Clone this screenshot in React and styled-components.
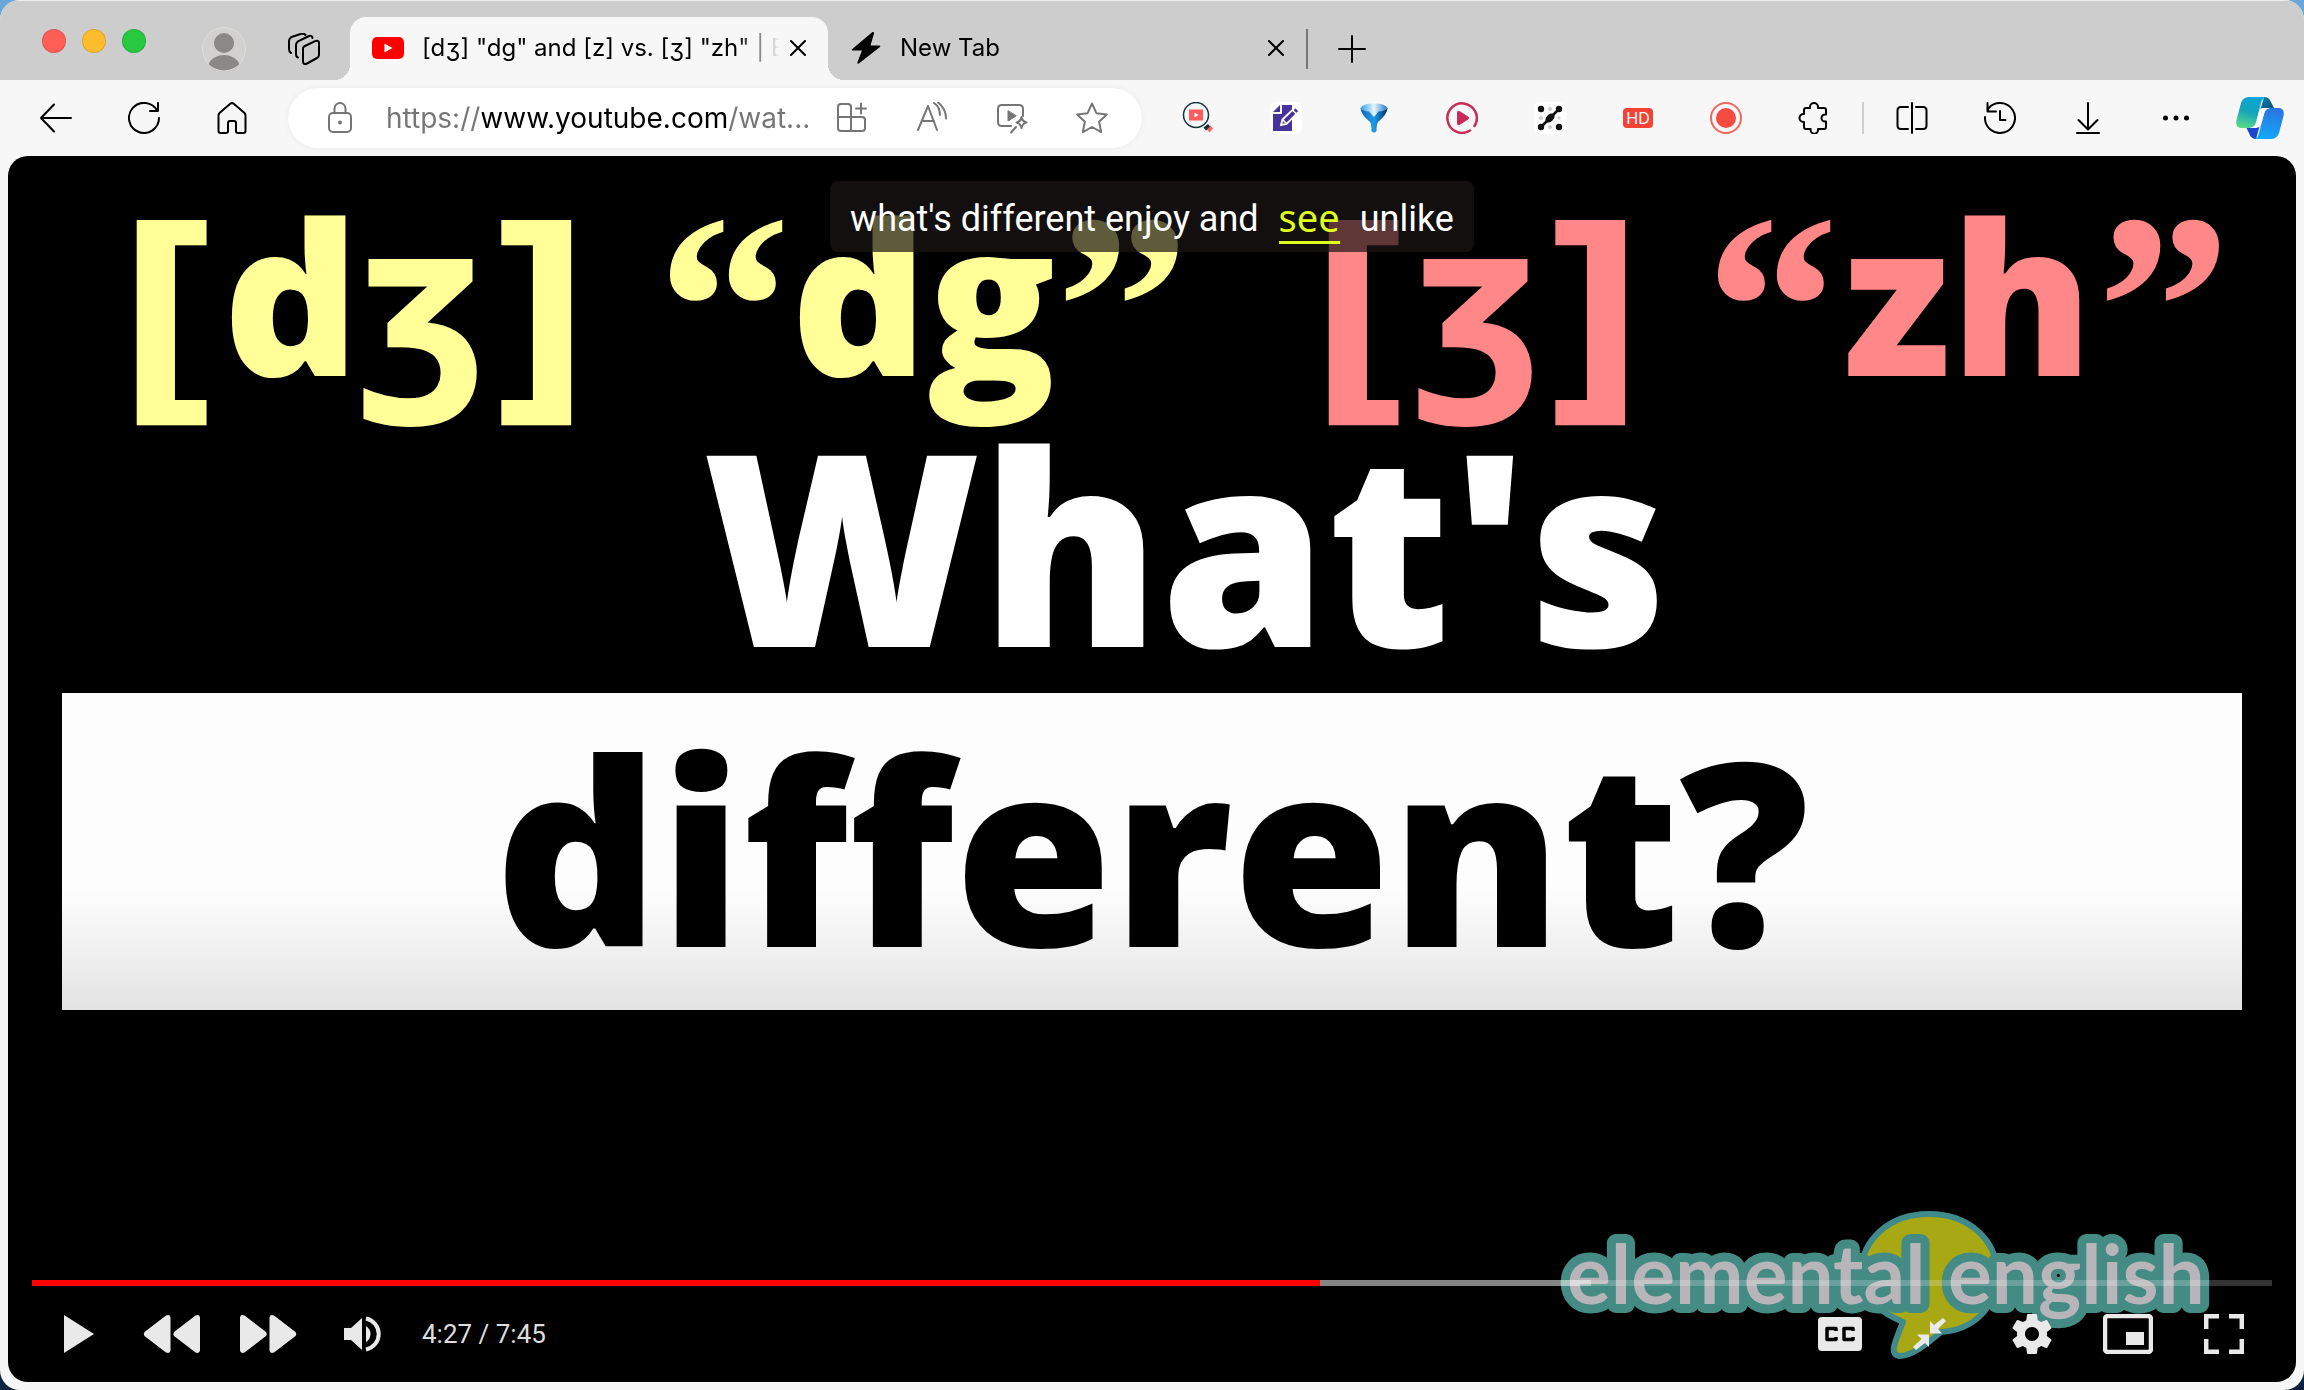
import React from "react";
import styled, { createGlobalStyle } from "styled-components";

const UI = `Inter, "Noto Sans", sans-serif`;
const PLAYER = `Roboto, "Noto Sans", sans-serif`;
const SLIDE = `"Open Sans", "Noto Sans", sans-serif`;

const GlobalStyle = createGlobalStyle`
  * { box-sizing: border-box; }
  body {
    margin: 0;
    background: linear-gradient(#6aa8dc, #0b2340);
    font-family: ${UI};
  }
  button {
    margin: 0;
    padding: 0;
    border: 0;
    background: none;
    color: inherit;
    font: inherit;
    cursor: pointer;
  }
  svg { display: block; flex: none; }
`;

/* ---------- window ---------- */

const Window = styled.div`
  display: flex;
  flex-direction: column;
  min-height: 100vh;
  overflow: hidden;
  border-radius: 20px;
  background: #f7f7f7;
  color: #000;
`;

const TabStrip = styled.header`
  display: flex;
  align-items: stretch;
  height: 80px;
  padding: 16px 0 0 42px;
  background: #cdcdcd;
  border-top: 1px solid #ececec;
`;

const Lights = styled.div`
  display: flex;
  gap: 16px;
  padding-top: 12px;
`;

const Light = styled.button`
  width: 24px;
  height: 24px;
  border-radius: 50%;
  background: ${(p) => p.$color};
  box-shadow: inset 0 0 0 1px rgba(0, 0, 0, 0.12);
`;

const StripTools = styled.div`
  display: flex;
  align-items: center;
  gap: 42px;
  padding: 0 30px 0 56px;
`;

const TabItem = styled.div`
  position: relative;
  display: flex;
  align-items: center;
  width: 478px;
  padding: 0 18px 2px 22px;
  border-radius: 16px 16px 0 0;
  background: ${(p) => (p.$active ? "#f7f7f7" : "transparent")};

  &::before,
  &::after {
    content: ${(p) => (p.$active ? '""' : "none")};
    position: absolute;
    bottom: 0;
    width: 16px;
    height: 16px;
  }
  &::before {
    right: 100%;
    background: radial-gradient(circle at 0 0, transparent 16px, #f7f7f7 16px);
  }
  &::after {
    left: 100%;
    background: radial-gradient(circle at 100% 0, transparent 16px, #f7f7f7 16px);
  }
`;

const TabLabel = styled.button`
  display: flex;
  flex: 1;
  align-items: center;
  gap: 18px;
  min-width: 0;
  height: 100%;
`;

const TabTitle = styled.span`
  flex: 1;
  min-width: 0;
  margin-right: 6px;
  white-space: nowrap;
  text-align: left;
  font-size: 24px;
  line-height: 32px;
  mask-image: linear-gradient(to left, transparent, #000 44px);
`;

const IconButton = styled.button`
  display: grid;
  flex: none;
  place-items: center;
  width: ${(p) => p.$width || 88}px;
  height: ${(p) => p.$height || 48}px;
  color: ${(p) => p.$color || "inherit"};
`;

const Divider = styled.span`
  flex: none;
  width: 2px;
  height: ${(p) => p.$height}px;
  margin: 0 ${(p) => p.$gap || 0}px;
  background: ${(p) => p.$color};
  align-self: center;
`;

/* ---------- toolbar ---------- */

const Toolbar = styled.nav`
  display: flex;
  align-items: center;
  height: 76px;
  padding: 0 4px 0 12px;
`;

const AddressBar = styled.div`
  display: flex;
  flex: 1;
  align-items: center;
  min-width: 0;
  height: 60px;
  margin: 0 12px;
  padding: 0 10px 0 12px;
  border-radius: 30px;
  background: #fff;
  box-shadow: 0 0 6px rgba(0, 0, 0, 0.06);
  color: #757575;
`;

const AddressInput = styled.input`
  flex: 1;
  min-width: 0;
  margin-left: 6px;
  padding: 0;
  border: 0;
  outline: 0;
  font: 28px/40px ${UI};
  color: transparent;
  caret-color: #000;
  background: linear-gradient(90deg, #757575 96px, #000 96px, #000 342px, #757575 342px);
  background-clip: text;
  -webkit-background-clip: text;
`;

const Tools = styled.div`
  display: flex;
  align-items: center;
`;

/* ---------- player ---------- */

const Player = styled.main`
  position: relative;
  display: flex;
  flex: 1;
  flex-direction: column;
  margin: 0 8px 8px;
  overflow: hidden;
  border-radius: 20px;
  background: #000;
`;

const Slide = styled.section`
  flex: 1;
  padding-top: 48px;
  font-family: ${SLIDE};
  font-weight: 800;
`;

const Phonemes = styled.div`
  display: flex;
  justify-content: space-between;
  padding: 0 65px 0 109px;
  white-space: nowrap;
`;

const PhonemePair = styled.div`
  display: flex;
  gap: 66px;
  color: ${(p) => p.$color};
`;

const Phoneme = styled.span`
  display: flex;
  align-items: flex-start;
  justify-content: space-between;
  width: ${(p) => p.$width}px;
  font-size: 212px;
  line-height: 180px;
`;

const Bracket = styled.span`
  font-family: "DejaVu Sans", sans-serif;
  font-size: 230px;
  line-height: 224px;
`;

const Quote = styled.span`
  font-family: "Liberation Serif", serif;
  font-size: 268px;
  line-height: 208px;
`;

const Question = styled.div`
  padding-left: 66px;
  text-align: center;
  font-size: 268px;
  line-height: 232px;
  color: #fff;
`;

const Band = styled.div`
  display: flex;
  align-items: center;
  justify-content: center;
  height: 317px;
  margin: 33px 54px 0;
  padding-bottom: 8px;
  background: linear-gradient(#fdfdfd 62%, #e3e3e3);
  color: #000;
  font-size: 256px;
  line-height: 244px;
`;

const Caption = styled.p`
  position: absolute;
  top: 25px;
  left: 50%;
  display: flex;
  gap: 20px;
  margin: 0;
  padding: 16px 20px 8px;
  transform: translateX(-50%);
  border-radius: 8px;
  background: rgba(26, 22, 20, 0.7);
  color: #fff;
  font: 36px/44px ${PLAYER};
  white-space: nowrap;
`;

const Marked = styled.span`
  height: 47px;
  border-bottom: 3px solid #dfff1c;
  color: #dfff1c;
  font-family: "Noto Sans", sans-serif;
  font-size: 38px;
  line-height: 40px;
`;

const Logo = styled.svg`
  position: absolute;
  right: 76px;
  bottom: 22px;
`;

const Controls = styled.div`
  position: relative;
  color: #e9e9e9;
`;

const Seek = styled.input`
  appearance: none;
  display: block;
  width: calc(100% - 48px);
  height: 6px;
  margin: 0 24px;
  background: linear-gradient(
    90deg,
    #f00 ${(p) => p.$played}%,
    rgba(255, 255, 255, 0.52) ${(p) => p.$played}%,
    rgba(255, 255, 255, 0.52) ${(p) => p.$loaded}%,
    rgba(255, 255, 255, 0.2) ${(p) => p.$loaded}%
  );

  &::-webkit-slider-thumb {
    appearance: none;
    width: 0;
    height: 0;
  }
`;

const ControlRow = styled.div`
  display: flex;
  align-items: center;
  height: 96px;
  padding: 0 24px 0 20px;
`;

const Clock = styled.span`
  flex: 1;
  padding-left: 10px;
  font: 26px/32px ${PLAYER};
  color: #ddd;
`;

/* ---------- icons ---------- */

const Line = ({ w = 32, h = 32, sw = 2, children, ...rest }) => (
  <svg width={w} height={h} viewBox={`0 0 ${w} ${h}`} fill="none" stroke="currentColor"
    strokeWidth={sw} strokeLinecap="round" strokeLinejoin="round" aria-hidden="true" {...rest}>
    {children}
  </svg>
);

const Solid = ({ w = 32, h = 32, children }) => (
  <svg width={w} height={h} viewBox={`0 0 ${w} ${h}`} fill="currentColor" aria-hidden="true">
    {children}
  </svg>
);

const CloseIcon = () => <Line w={16} h={16}><path d="M1 1l14 14M15 1L1 15" /></Line>;

const ProfileIcon = () => (
  <svg width="44" height="44" viewBox="0 0 44 44" aria-hidden="true">
    <clipPath id="avatar"><circle cx="22" cy="22" r="21.5" /></clipPath>
    <circle cx="22" cy="22" r="21.5" fill="#d2d1cf" stroke="#dededc" />
    <g fill="#8a8987" clipPath="url(#avatar)">
      <circle cx="22" cy="16" r="10" />
      <ellipse cx="22" cy="41" rx="16" ry="13" />
    </g>
  </svg>
);

const WorkspacesIcon = () => (
  <Line>
    <path d="M16 13.500L27 8.200Q31 6.500 31 10V22Q31 24 29 25L19 30.500Q15 32 15 28.500V16Q15 14.300 16 13.500Z" />
    <path d="M10 24.500Q8 24 8 21V12Q8 9.500 10 8.300L21 3Q24 2 24.500 5" />
    <path d="M3 20Q1 19 1 16V8Q1 5.500 3 4.300L13 0.800Q16 0.200 17.500 2" />
  </Line>
);

const YouTubeIcon = () => (
  <Solid><rect y="5" width="32" height="22" rx="5" fill="#f00" /><path d="M12.500 11.500v9l8-4.500z" fill="#fff" /></Solid>
);

const BoltIcon = () => (
  <Solid><path d="M22.500 0L2 17.200q-1 1.300.6 1.300H12L7.500 30q-.5 2 1 1.800L30 15q1-1.300-.8-1.500H20.500L24 1.500Q24-.5 22.500 0Z" /></Solid>
);

const PlusIcon = () => <Line w={28} h={28}><path d="M14 1v26M1 14h26" /></Line>;
const BackIcon = () => <Line><path d="M31 16H1M14 2.500L1 16l13 13.500" /></Line>;
const ReloadIcon = () => <Line><path d="M30 1v8h-8M29.300 9A15 15 0 1 0 31 16" /></Line>;
const HomeIcon = () => (
  <Line><path d="M2.500 13.500Q2.500 12 3.500 11L14.500 1.600q1.500-1.200 3 0L28.500 11q1 1 1 2.500V29q0 2-2 2H22q-2 0-2-2V21q0-2-2-2h-4q-2 0-2 2v8q0 2-2 2H4.500q-2 0-2-2Z" /></Line>
);
const LockIcon = () => (
  <Line><rect x="5" y="11" width="22" height="19" rx="4" /><path d="M10.500 11V6.500a5.500 5.500 0 0 1 11 0V11" /><circle cx="16" cy="20.500" r="1" fill="currentColor" /></Line>
);
const AppsIcon = () => (
  <Line>
    <path d="M15 29V5q0-3-3-3H5Q2 2 2 5V26q0 3 3 3H26q3 0 3-3V18q0-3-3-3H2" />
    <path d="M25 1.500v10M20 6.500h10" />
  </Line>
);
const ReadAloudIcon = () => (
  <Line><path d="M2 28L12 4l9 24M6 19h12M18 1q6 4 6 12M22 0.500q8 6 8 16" /></Line>
);
const VideoSparkIcon = () => (
  <Line>
    <path d="M27 14V7q0-4-4-4H6Q2 3 2 7V20q0 4 4 4H15" />
    <path d="M12 9v10l8-5z" fill="currentColor" strokeWidth="1" />
    <path d="M25.500 15q.8 4.500 5 5.500-4.200 1-5 5.500-.8-4.500-5-5.500 4.200-1 5-5.500ZM20 25l-5 5.500" />
  </Line>
);
const StarIcon = () => (
  <Line><path d="M16 1.500l4.400 9.700 10.400 1.300-7.700 7.200 2.100 10.400L16 25l-9.200 5.100 2.100-10.400L1.200 12.500l10.400-1.300Z" /></Line>
);

const VideoSearchIcon = () => (
  <svg width="32" height="32" viewBox="0 0 32 32" aria-hidden="true">
    <circle cx="14" cy="13" r="12.500" fill="#f3f7f8" stroke="#16323c" strokeWidth="1.500" />
    <rect x="7" y="7.500" width="14" height="11" fill="#ff5a5f" />
    <path d="M12.500 10.500v5l4-2.500z" fill="#fff" />
    <path d="M24 26l4-3.500 2.500 3-3.500 4z" fill="#ff6468" transform="translate(0.500 1)" />
    <path d="M21.500 25.500l4.500-3.500 2 2.500-4 4z" fill="#152c36" />
  </svg>
);
const NotesIcon = () => (
  <svg width="32" height="32" viewBox="0 0 32 32" aria-hidden="true">
    <rect width="32" height="32" rx="6" fill="#fff" />
    <path d="M12 3h10v26H3V12h9z" fill="#46349c" />
    <path d="M10 3v7H3z" fill="#46349c" />
    <path d="M11 23l1.500-5.500L25.500 5l4 4L16.500 22z" fill="#46349c" stroke="#fff" strokeWidth="1.800" />
    <path d="M22.500 8l4 4M12.500 17.500l4 4" stroke="#fff" strokeWidth="1.500" />
  </svg>
);
const FunnelIcon = () => (
  <svg width="32" height="32" viewBox="0 0 32 32" aria-hidden="true">
    <defs>
      <linearGradient id="funnel"><stop stopColor="#0c62b4" /><stop offset=".3" stopColor="#1b86d8" /><stop offset=".5" stopColor="#1c9be8" /><stop offset="1" stopColor="#052f66" /></linearGradient>
      <linearGradient id="funnelTop"><stop stopColor="#2b9be6" /><stop offset=".5" stopColor="#e6f6ff" /><stop offset="1" stopColor="#1a78c8" /></linearGradient>
    </defs>
    <path d="M2.500 6Q2.500 12 12 20Q13.500 22 13.500 29q2.500 3 5 0Q18.500 22 20 20Q29.500 12 29.500 6Z" fill="url(#funnel)" />
    <path d="M2.500 6.500Q4 1.500 16 1.500T29.500 6.500Q27 9 20.500 9.500L16 15 11 9.500Q5 9 2.500 6.500Z" fill="url(#funnelTop)" />
  </svg>
);
const PlayRingIcon = () => (
  <svg width="32" height="32" viewBox="0 0 32 32" fill="none" aria-hidden="true">
    <path d="M28.500 24A14.700 14.700 0 1 0 24 28.500" stroke="#cb2a58" strokeWidth="2.500" strokeLinecap="round" />
    <path d="M11.500 10.500v11q0 2 2 1l8.500-5.500q1.300-1 0-2l-8.500-5.500q-2-1-2 1Z" fill="#cb2a58" stroke="#cb2a58" />
  </svg>
);
const DotsGridIcon = () => (
  <svg width="32" height="32" viewBox="0 0 32 32" aria-hidden="true">
    <rect width="32" height="32" rx="5" fill="#fff" />
    <g fill="#cfcfcf"><circle cx="16" cy="7" r="2" /><circle cx="16" cy="25" r="2" /><circle cx="7" cy="16" r="2" /><circle cx="25" cy="16" r="1.500" /></g>
    <path d="M7 25L25 7" stroke="#111" strokeWidth="2.500" />
    <g fill="#111"><circle cx="7" cy="7" r="3.200" /><circle cx="25" cy="7" r="3.200" /><circle cx="7" cy="25" r="3.200" /><circle cx="25" cy="25" r="3.200" /><ellipse cx="16" cy="16" rx="5.500" ry="3.500" transform="rotate(-45 16 16)" /></g>
  </svg>
);
const RecordIcon = () => (
  <svg width="32" height="32" viewBox="0 0 32 32" aria-hidden="true">
    <circle cx="16" cy="16" r="15" fill="none" stroke="#f4655c" strokeWidth="2" /><circle cx="16" cy="16" r="10" fill="#f44c41" />
  </svg>
);
const HdBadge = styled.span`
  display: grid;
  place-items: center;
  width: 30px;
  height: 20px;
  border-radius: 4px;
  background: #f44336;
  color: #fff;
  font: 16px/20px ${UI};
`;
const PuzzleIcon = () => (
  <Line><path d="M6 11V8q0-2 2-2h4V5a4 4 0 0 1 8 0v1H26q2 0 2 2v4.500h-1a3.500 3.500 0 0 0 0 7h1V25q0 2-2 2h-6v1a3.700 3.700 0 0 1-7.400 0v-1H8q-2 0-2-2v-5H5.500a4 4 0 0 1 0-8H6Z" /></Line>
);
const SplitIcon = () => (
  <Line><path d="M16 1v30M12 5H5Q1.500 5 1.500 8.500v15Q1.500 27 5 27h7M20 5h7q3.500 0 3.500 3.500v15Q30.500 27 27 27h-7" /></Line>
);
const HistoryIcon = () => (
  <Line><path d="M1 15A15 15 0 1 0 4.500 6.300L3.500 9M3.500 1v8.500H12M16 9v9h5.500" /></Line>
);
const DownloadIcon = () => <Line><path d="M16 1v26M6.500 18L16 27.500 25.500 18M5 31h22" /></Line>;
const MoreIcon = () => (
  <Solid><circle cx="5.500" cy="16" r="2.500" /><circle cx="16" cy="16" r="2.500" /><circle cx="26.500" cy="16" r="2.500" /></Solid>
);
const CopilotIcon = () => (
  <svg width="48" height="42" viewBox="0 0 48 42" aria-hidden="true">
    <defs>
      <linearGradient id="cpA" x1=".6" y1="0" x2=".3" y2="1"><stop stopColor="#08a3dc" /><stop offset=".5" stopColor="#16a6b8" /><stop offset="1" stopColor="#57d98b" /></linearGradient>
      <linearGradient id="cpB" x1=".5" y1="0" x2=".3" y2="1"><stop stopColor="#2b74e4" /><stop offset="1" stopColor="#11aaf6" /></linearGradient>
      <linearGradient id="cpC" x1="0" y1="0" x2="1" y2="1"><stop stopColor="#0883b4" /><stop offset="1" stopColor="#0c4c72" /></linearGradient>
    </defs>
    <path d="M25 11H33L23 31H15Z" fill="#fff" />
    <path d="M28 0Q33 0 35 5L38 11H30Q27 11 24 14Z" fill="url(#cpC)" />
    <path d="M20 42Q15 42 13 36L10.500 31H17Q21 31 24 28Z" fill="#1b45cf" />
    <path d="M14 0H31C27 0 26 3 25 6L20 25C19 29 17 31 13 31H6C1 31-.5 28 .5 23L5 6C6.500 2 9 0 14 0Z" fill="url(#cpA)" />
    <path d="M34 42H17C21 42 22 39 23 36L28 17C29 13 31 11 35 11H42C47 11 48.500 14 47.500 19L43 36C41.500 40 39 42 34 42Z" fill="url(#cpB)" />
    <path d="M27 11H34C30 12 29 14 28 17L25 27C24 30 22 31 19 31H14C18 30 19.500 28 20.500 25L23 15C24 12 25 11 27 11Z" fill="#fff" />
  </svg>
);

const PlayIcon = () => <Solid w={36} h={40}><path d="M6 1l30 19L6 39z" /></Solid>;
const RewindIcon = () => (
  <Solid w={58} h={40}>
    <path d="M1.500 18Q0 20 1.500 22L23 38.500q4 1.500 4.500-2v-33q-.5-3.500-4.500-2ZM31 18q-1.500 2 0 4L52.500 38.500q4 1.500 4.500-2v-33q-.5-3.500-4.500-2Z" />
  </Solid>
);
const ForwardIcon = () => (
  <Solid w={58} h={40}>
    <path d="M27 18q1.500 2 0 4L5.500 38.500q-4 1.500-4.500-2v-33q.5-3.500 4.500-2ZM56.500 18q1.500 2 0 4L35 38.500q-4 1.500-4.500-2v-33q.5-3.500 4.500-2Z" />
  </Solid>
);
const VolumeIcon = () => (
  <Solid w={40} h={40}>
    <path d="M0 14v12h7l11 10V4L7 14ZM22 12q4.500 3 4.500 8T22 28Z" />
    <path d="M22 4.500a15.800 15.800 0 0 1 0 31" fill="none" stroke="currentColor" strokeWidth="4" />
  </Solid>
);
const CcIcon = () => (
  <svg width="44" height="34" viewBox="0 0 44 34" fill="none" aria-hidden="true">
    <rect width="44" height="34" rx="4" fill="currentColor" />
    <path d="M18 14v-2.500H9v11h9V20M35 14v-2.500h-9v11h9V20" stroke="#000" strokeWidth="3.500" strokeLinejoin="round" />
  </svg>
);
const ShrinkIcon = () => (
  <Solid w={46} h={34}>
    <path d="M17 16.500V4l4 4 9-7 3 3-8 8 4 4.500ZM16 17.500V30l-4-4-9 7-3-3 8.500-8-4.500-4.500Z" />
  </Solid>
);
const GearIcon = () => (
  <svg width="40" height="40" viewBox="2 2 20 20" fill="currentColor" aria-hidden="true">
    <path d="M19.430 12.980c.04-.32.07-.64.07-.98s-.03-.66-.07-.98l2.110-1.650c.19-.15.24-.42.12-.64l-2-3.460c-.12-.22-.39-.3-.61-.22l-2.490 1c-.52-.4-1.080-.73-1.690-.98l-.38-2.650A.488.488 0 0 0 14 2h-4c-.25 0-.46.18-.49.42l-.38 2.650c-.61.25-1.170.59-1.690.98l-2.490-1c-.23-.09-.49 0-.61.22l-2 3.460c-.13.22-.07.49.12.64l2.110 1.650c-.04.32-.07.65-.07.98s.03.66.07.98l-2.110 1.650c-.19.15-.24.42-.12.64l2 3.460c.12.22.39.3.61.22l2.490-1c.52.4 1.080.73 1.690.98l.38 2.650c.03.24.24.42.49.42h4c.25 0 .46-.18.49-.42l.38-2.650c.61-.25 1.170-.59 1.690-.98l2.490 1c.23.09.49 0 .61-.22l2-3.460c.12-.22.07-.49-.12-.64l-2.110-1.650zM12 15.500c-1.930 0-3.500-1.570-3.500-3.500s1.570-3.500 3.500-3.500 3.500 1.570 3.500 3.500-1.570 3.500-3.500 3.500z" />
  </svg>
);
const PipIcon = () => (
  <svg width="50" height="40" viewBox="0 0 50 40" fill="none" aria-hidden="true">
    <rect x="2" y="2" width="46" height="36" rx="3" stroke="currentColor" strokeWidth="4.500" />
    <rect x="23" y="18" width="18" height="13" fill="currentColor" />
  </svg>
);
const FullscreenIcon = () => (
  <svg width="40" height="40" viewBox="0 0 40 40" fill="none" stroke="currentColor" strokeWidth="4.500" aria-hidden="true">
    <path d="M2.200 15V2.200H15M25 2.200h12.800V15M37.800 25v12.800H25M15 37.800H2.200V25" />
  </svg>
);

/* ---------- data ---------- */

const navButtons = [["Back", BackIcon], ["Refresh", ReloadIcon], ["Home", HomeIcon]];
const pageActions = [["Apps", AppsIcon], ["Read aloud", ReadAloudIcon], ["Enhance video", VideoSparkIcon], ["Add to favorites", StarIcon]];
const extensions = [
  ["Video search", VideoSearchIcon],
  ["Notes", NotesIcon],
  ["Funnel", FunnelIcon],
  ["Player", PlayRingIcon],
  ["Graph", DotsGridIcon],
  ["HD", () => <HdBadge>HD</HdBadge>],
  ["Record", RecordIcon],
  ["Extensions", PuzzleIcon],
];
const browserTools = [["Split screen", SplitIcon], ["History", HistoryIcon], ["Downloads", DownloadIcon], ["More", MoreIcon]];
const leftControls = [["Play", PlayIcon], ["Back 10 seconds", RewindIcon], ["Forward 10 seconds", ForwardIcon], ["Mute", VolumeIcon]];
const rightControls = [["Captions", CcIcon], ["Shrink", ShrinkIcon], ["Settings", GearIcon], ["Picture in picture", PipIcon], ["Full screen", FullscreenIcon]];
const phonemePairs = [
  { color: "#fffe97", sound: "dʒ", soundWidth: 474, spelling: "dg", spellingWidth: 526 },
  { color: "#ff8787", sound: "ʒ", soundWidth: 330, spelling: "zh", spellingWidth: 526 },
];

const IconButtons = ({ items, ...size }) =>
  items.map(([label, Icon]) => (
    <IconButton key={label} type="button" aria-label={label} {...size}><Icon /></IconButton>
  ));

const BrowserTab = ({ active, icon: Icon, title }) => (
  <TabItem $active={active}>
    <TabLabel type="button" role="tab" aria-selected={!!active}>
      <Icon /><TabTitle>{title}</TabTitle>
    </TabLabel>
    <IconButton type="button" aria-label="Close tab" $width={24} $height={24}><CloseIcon /></IconButton>
  </TabItem>
);

const LogoText = styled.text`
  font: 700 82px Lato, sans-serif;
  fill: #b7b5b9;
  stroke: #448b83;
  stroke-width: 18px;
  stroke-linejoin: round;
  paint-order: stroke;
`;

const ElementalLogo = () => (
  <Logo width="664" height="152" viewBox="1556 1208 664 152" role="img" aria-label="elemental english">
    <path d="M1929 1214c40 0 68 26 68 60s-24 56-56 58c-12 10-28 24-42 24-10-2-4-14 4-34-24-10-42-26-42-48 0-34 28-60 68-60Z" fill="#a8a815" stroke="#418a8c" strokeWidth="6" strokeLinejoin="round" />
    <LogoText x="1567" y="1304">elemental</LogoText>
    <LogoText x="1948" y="1304">english</LogoText>
  </Logo>
);

export default function App() {
  return (
    <>
      <GlobalStyle />
      <Window>
        <TabStrip>
          <Lights>
            <Light type="button" aria-label="Close window" $color="#ff5f57" />
            <Light type="button" aria-label="Minimize window" $color="#febc2e" />
            <Light type="button" aria-label="Zoom window" $color="#28c840" />
          </Lights>
          <StripTools>
            <IconButton type="button" aria-label="Profile" $width={44}><ProfileIcon /></IconButton>
            <IconButton type="button" aria-label="Workspaces" $width={32}><WorkspacesIcon /></IconButton>
          </StripTools>
          <BrowserTab active icon={YouTubeIcon} title={'[dʒ] "dg" and [z] vs. [ʒ] "zh" | E'} />
          <BrowserTab icon={BoltIcon} title="New Tab" />
          <Divider $height={40} $color="#767676" />
          <IconButton type="button" aria-label="New tab" $height={64}><PlusIcon /></IconButton>
        </TabStrip>

        <Toolbar>
          <IconButtons items={navButtons} />
          <AddressBar>
            <IconButton type="button" aria-label="Site information" $width={80}><LockIcon /></IconButton>
            <AddressInput aria-label="Address" defaultValue="https://www.youtube.com/wat..." />
            <IconButtons items={pageActions} $width={80} />
          </AddressBar>
          <Tools>
            <IconButtons items={extensions} />
            <Divider $height={32} $gap={4} $color="#cfcfcf" />
            <IconButtons items={browserTools} />
            <IconButton type="button" aria-label="Copilot" $width={80}><CopilotIcon /></IconButton>
          </Tools>
        </Toolbar>

        <Player>
          <Slide>
            <Phonemes>
              {phonemePairs.map((p) => (
                <PhonemePair key={p.sound} $color={p.color}>
                  <Phoneme $width={p.soundWidth}>
                    <Bracket>[</Bracket><span>{p.sound}</span><Bracket>]</Bracket>
                  </Phoneme>
                  <Phoneme $width={p.spellingWidth}>
                    <Quote>“</Quote><span>{p.spelling}</span><Quote>”</Quote>
                  </Phoneme>
                </PhonemePair>
              ))}
            </Phonemes>
            <Question>What's</Question>
            <Band>different?</Band>
          </Slide>
          <Caption>
            <span>what's different enjoy and</span>
            <Marked>see</Marked>
            <span>unlike</span>
          </Caption>
          <ElementalLogo />
          <Controls>
            <Seek type="range" aria-label="Seek" min="0" max="465" defaultValue="267" $played={57.5} $loaded={69.6} />
            <ControlRow>
              <IconButtons items={leftControls} $width={96} />
              <Clock>4:27 / 7:45</Clock>
              <IconButtons items={rightControls} $width={96} />
            </ControlRow>
          </Controls>
        </Player>
      </Window>
    </>
  );
}
